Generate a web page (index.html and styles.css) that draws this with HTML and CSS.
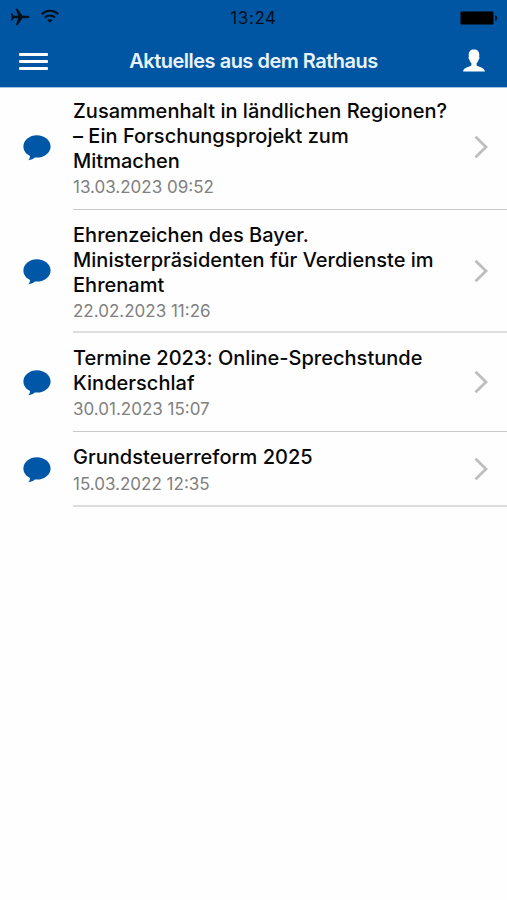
FILE: index.html
```
<!DOCTYPE html>
<html lang="de">
<head>
<meta charset="utf-8">
<title>Aktuelles aus dem Rathaus</title>
<link rel="stylesheet" href="styles.css">
</head>
<body>
<svg width="0" height="0" class="defs">
  <symbol id="bubble" viewBox="0 0 28 26"><path d="M14 .3C6.500.3.4 5.200.4 11.500c0 4 2.500 7.500 6.600 9.400.1 1.500-.5 2.900-1.700 4.300 3.100-.3 5.200-1.300 6.500-2.700.7.100 1.500.1 2.200.1 7.500 0 13.600-4.900 13.600-11.100S21.500.3 14 .3z" fill="#0056a7"/></symbol>
  <symbol id="chevron" viewBox="0 0 14 24"><path d="M1.500 1.800L12 12 1.500 22.200" fill="none" stroke="#bebebe" stroke-width="2.800"/></symbol>
</svg>
<header class="header">
  <div class="status">
    <svg class="plane" viewBox="0 0 20 18"><path d="M19.500 9c0-.8-1.300-1.200-2.500-1.200h-4.500L7.500.8H5.700l2.500 7H4L2 5.300H.8L1.700 9 .8 12.700H2L4 10.200h4.200l-2.500 7h1.800l5-7H17c1.200 0 2.500-.4 2.500-1.200z"/></svg>
    <svg class="wifi" viewBox="0 0 18 15"><path d="M.8 5.200c4.600-4.500 11.800-4.500 16.400 0M3.900 8.500c2.900-2.800 7.300-2.800 10.200 0" fill="none" stroke="#03101c" stroke-width="2"/><path d="M6.300 11.100c1.600-1.300 3.800-1.300 5.400 0L9 14z"/></svg>
    <span class="clock">13:24</span>
    <svg class="battery" viewBox="0 0 38 14"><rect x=".5" y=".5" width="33" height="13" rx="1.500" fill="#000" stroke="#04294f"/><path d="M35 4.200c3 .6 3 5 0 5.600z"/></svg>
  </div>
  <nav class="nav">
    <div class="menu"><i></i><i></i><i></i></div>
    <h1>Aktuelles aus dem Rathaus</h1>
    <svg class="user" viewBox="0 0 22 23"><path d="M11 .5c3.500 0 5.300 2 5.300 5.500 0 .8-.1 1.400-.2 2 .7.300.5 2-.5 2.600-.4 1.700-1.100 2.800-2 3.700v2c.4 1.500 8.100 1.700 8.300 6.200H.1c.2-4.500 7.900-4.700 8.300-6.200v-2c-.9-.9-1.600-2-2-3.700-1-.6-1.200-2.300-.5-2.600-.1-.6-.2-1.200-.2-2C5.700 2.500 7.500.5 11 .5z" fill="#fff"/></svg>
  </nav>
</header>
<main class="list">
  <article class="row r1">
    <svg class="bubble"><use href="#bubble"/></svg>
    <div class="body"><div class="text"><h2><span>Zusammenhalt in ländlichen Regionen?</span><span>– Ein Forschungsprojekt zum</span><span>Mitmachen</span></h2><time>13.03.2023 09:52</time></div><svg class="chevron"><use href="#chevron"/></svg></div>
  </article>
  <article class="row r2">
    <svg class="bubble"><use href="#bubble"/></svg>
    <div class="body"><div class="text"><h2><span>Ehrenzeichen des Bayer.</span><span>Ministerpräsidenten für Verdienste im</span><span>Ehrenamt</span></h2><time>22.02.2023 11:26</time></div><svg class="chevron"><use href="#chevron"/></svg></div>
  </article>
  <article class="row r3">
    <svg class="bubble"><use href="#bubble"/></svg>
    <div class="body"><div class="text"><h2><span>Termine 2023: Online-Sprechstunde</span><span>Kinderschlaf</span></h2><time>30.01.2023 15:07</time></div><svg class="chevron"><use href="#chevron"/></svg></div>
  </article>
  <article class="row r4">
    <svg class="bubble"><use href="#bubble"/></svg>
    <div class="body"><div class="text"><h2><span>Grundsteuerreform 2025</span></h2><time>15.03.2022 12:35</time></div><svg class="chevron"><use href="#chevron"/></svg></div>
  </article>
</main>
</body>
</html>
```
FILE: styles.css
```
* { box-sizing: border-box; }
body { margin: 0; min-height: 900px; background: #fefefe; font-family: Inter, "Liberation Sans", sans-serif; color: #080808; }
svg { display: block; flex: none; }
.defs { position: absolute; }
.header { height: 88px; background: #0056a3; border-bottom: 1px solid #9fc3e0; }
.status { height: 35px; display: grid; grid-template-columns: 33px 1fr 57px 1fr 38px; padding: 0 9px 0 10px; align-items: center; fill: #03101c; }
.plane { width: 20px; height: 18px; margin-top: -2px; }
.wifi { width: 18px; height: 15px; margin: -3px 0 0 -2px; }
.clock { padding-left: 4px; font-size: 17px; letter-spacing: .6px; color: #03101c; text-align: center; white-space: nowrap; }
.battery { grid-column: 5; width: 38px; height: 14px; }
.nav { height: 52px; display: flex; align-items: center; justify-content: space-between; padding: 0 22px 0 19px; }
.menu { display: flex; flex-direction: column; gap: 4px; width: 29px; }
.menu i { height: 3px; border-radius: 1px; background: #fff; }
h1 { margin: 0 4px 0 0; font-size: 20px; font-weight: 600; letter-spacing: -.5px; color: #e9f3fc; white-space: nowrap; }
.user { width: 22px; height: 23px; margin-bottom: 2px; }
.row { display: flex; align-items: stretch; padding-left: 23px; }
.bubble { width: 28px; height: 26px; align-self: center; }
.body { flex: 1; margin-left: 22px; display: flex; justify-content: space-between; border-bottom: 2px solid #dcdcdc; padding-right: 19px; }
.chevron { width: 14px; height: 24px; align-self: center; }
h2 { margin: 0; font-size: 20px; line-height: 25px; font-weight: 500; letter-spacing: .02px; }
h2 span { display: block; white-space: nowrap; width: max-content; }
time { display: block; width: max-content; margin-top: 1px; font-size: 17px; line-height: 24px; color: #808080; }
.text { padding-top: 13px; }
.r1 { height: 122px; }
.r1 .text { padding-top: 11px; }
.r1 .bubble { margin-bottom: 2px; }
.r1 .chevron { margin-bottom: 3px; }
.r2 { height: 123px; }
.r3 { height: 99px; }
.r4 { height: 75px; }
.r1 .body, .r3 .body { border-bottom: 1px solid #cacaca; }
.r4 time { margin-top: 2px; }
```
